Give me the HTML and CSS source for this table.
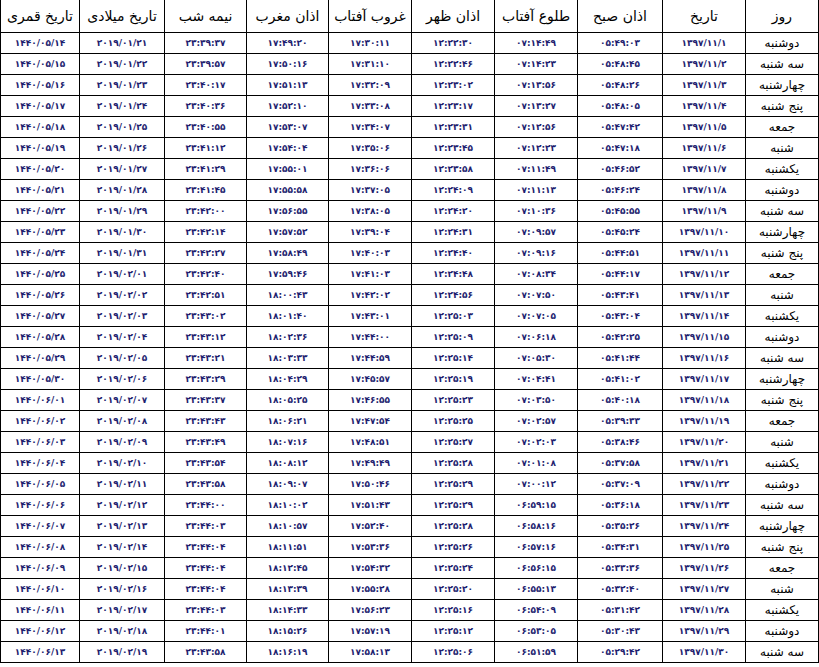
FILE: index.html
```html
<!DOCTYPE html>
<html lang="fa" dir="rtl">
<head>
<meta charset="utf-8">
<title>اوقات شرعی</title>
<link rel="stylesheet" href="styles.css">
</head>
<body>
<table class="times">
<colgroup>
<col class="c-day"><col class="c-date"><col class="c-fajr"><col class="c-sunrise"><col class="c-dhuhr"><col class="c-sunset"><col class="c-maghrib"><col class="c-midnight"><col class="c-greg"><col class="c-hijri">
</colgroup>
<thead>
<tr><th>روز</th><th>تاریخ</th><th>اذان صبح</th><th>طلوع آفتاب</th><th>اذان ظهر</th><th>غروب آفتاب</th><th>اذان مغرب</th><th>نیمه شب</th><th>تاریخ میلادی</th><th>تاریخ قمری</th></tr>
</thead>
<tbody>
<tr><td class="day">دوشنبه</td><td class="num">۱۳۹۷/۱۱/۱</td><td class="num">۰۵:۴۹:۰۳</td><td class="num">۰۷:۱۴:۴۹</td><td class="num">۱۲:۲۲:۳۰</td><td class="num">۱۷:۳۰:۱۱</td><td class="num">۱۷:۴۹:۲۰</td><td class="num">۲۳:۳۹:۳۷</td><td class="num">۲۰۱۹/۰۱/۲۱</td><td class="num">۱۴۴۰/۰۵/۱۴</td></tr>
<tr><td class="day">سه شنبه</td><td class="num">۱۳۹۷/۱۱/۲</td><td class="num">۰۵:۴۸:۴۵</td><td class="num">۰۷:۱۴:۲۳</td><td class="num">۱۲:۲۲:۴۶</td><td class="num">۱۷:۳۱:۱۰</td><td class="num">۱۷:۵۰:۱۶</td><td class="num">۲۳:۳۹:۵۷</td><td class="num">۲۰۱۹/۰۱/۲۲</td><td class="num">۱۴۴۰/۰۵/۱۵</td></tr>
<tr><td class="day">چهارشنبه</td><td class="num">۱۳۹۷/۱۱/۳</td><td class="num">۰۵:۴۸:۲۶</td><td class="num">۰۷:۱۳:۵۶</td><td class="num">۱۲:۲۳:۰۲</td><td class="num">۱۷:۳۲:۰۹</td><td class="num">۱۷:۵۱:۱۳</td><td class="num">۲۳:۴۰:۱۷</td><td class="num">۲۰۱۹/۰۱/۲۳</td><td class="num">۱۴۴۰/۰۵/۱۶</td></tr>
<tr><td class="day">پنج شنبه</td><td class="num">۱۳۹۷/۱۱/۴</td><td class="num">۰۵:۴۸:۰۵</td><td class="num">۰۷:۱۳:۲۷</td><td class="num">۱۲:۲۳:۱۷</td><td class="num">۱۷:۳۳:۰۸</td><td class="num">۱۷:۵۲:۱۰</td><td class="num">۲۳:۴۰:۳۶</td><td class="num">۲۰۱۹/۰۱/۲۴</td><td class="num">۱۴۴۰/۰۵/۱۷</td></tr>
<tr><td class="day">جمعه</td><td class="num">۱۳۹۷/۱۱/۵</td><td class="num">۰۵:۴۷:۴۲</td><td class="num">۰۷:۱۲:۵۶</td><td class="num">۱۲:۲۳:۳۱</td><td class="num">۱۷:۳۴:۰۷</td><td class="num">۱۷:۵۳:۰۷</td><td class="num">۲۳:۴۰:۵۵</td><td class="num">۲۰۱۹/۰۱/۲۵</td><td class="num">۱۴۴۰/۰۵/۱۸</td></tr>
<tr><td class="day">شنبه</td><td class="num">۱۳۹۷/۱۱/۶</td><td class="num">۰۵:۴۷:۱۸</td><td class="num">۰۷:۱۲:۲۳</td><td class="num">۱۲:۲۳:۴۵</td><td class="num">۱۷:۳۵:۰۶</td><td class="num">۱۷:۵۴:۰۴</td><td class="num">۲۳:۴۱:۱۲</td><td class="num">۲۰۱۹/۰۱/۲۶</td><td class="num">۱۴۴۰/۰۵/۱۹</td></tr>
<tr><td class="day">یکشنبه</td><td class="num">۱۳۹۷/۱۱/۷</td><td class="num">۰۵:۴۶:۵۲</td><td class="num">۰۷:۱۱:۴۹</td><td class="num">۱۲:۲۳:۵۸</td><td class="num">۱۷:۳۶:۰۶</td><td class="num">۱۷:۵۵:۰۱</td><td class="num">۲۳:۴۱:۲۹</td><td class="num">۲۰۱۹/۰۱/۲۷</td><td class="num">۱۴۴۰/۰۵/۲۰</td></tr>
<tr><td class="day">دوشنبه</td><td class="num">۱۳۹۷/۱۱/۸</td><td class="num">۰۵:۴۶:۲۴</td><td class="num">۰۷:۱۱:۱۳</td><td class="num">۱۲:۲۴:۰۹</td><td class="num">۱۷:۳۷:۰۵</td><td class="num">۱۷:۵۵:۵۸</td><td class="num">۲۳:۴۱:۴۵</td><td class="num">۲۰۱۹/۰۱/۲۸</td><td class="num">۱۴۴۰/۰۵/۲۱</td></tr>
<tr><td class="day">سه شنبه</td><td class="num">۱۳۹۷/۱۱/۹</td><td class="num">۰۵:۴۵:۵۵</td><td class="num">۰۷:۱۰:۳۶</td><td class="num">۱۲:۲۴:۲۰</td><td class="num">۱۷:۳۸:۰۵</td><td class="num">۱۷:۵۶:۵۵</td><td class="num">۲۳:۴۲:۰۰</td><td class="num">۲۰۱۹/۰۱/۲۹</td><td class="num">۱۴۴۰/۰۵/۲۲</td></tr>
<tr><td class="day">چهارشنبه</td><td class="num">۱۳۹۷/۱۱/۱۰</td><td class="num">۰۵:۴۵:۲۴</td><td class="num">۰۷:۰۹:۵۷</td><td class="num">۱۲:۲۴:۳۱</td><td class="num">۱۷:۳۹:۰۴</td><td class="num">۱۷:۵۷:۵۲</td><td class="num">۲۳:۴۲:۱۴</td><td class="num">۲۰۱۹/۰۱/۳۰</td><td class="num">۱۴۴۰/۰۵/۲۳</td></tr>
<tr><td class="day">پنج شنبه</td><td class="num">۱۳۹۷/۱۱/۱۱</td><td class="num">۰۵:۴۴:۵۱</td><td class="num">۰۷:۰۹:۱۶</td><td class="num">۱۲:۲۴:۴۰</td><td class="num">۱۷:۴۰:۰۳</td><td class="num">۱۷:۵۸:۴۹</td><td class="num">۲۳:۴۲:۲۷</td><td class="num">۲۰۱۹/۰۱/۳۱</td><td class="num">۱۴۴۰/۰۵/۲۴</td></tr>
<tr><td class="day">جمعه</td><td class="num">۱۳۹۷/۱۱/۱۲</td><td class="num">۰۵:۴۴:۱۷</td><td class="num">۰۷:۰۸:۳۴</td><td class="num">۱۲:۲۴:۴۸</td><td class="num">۱۷:۴۱:۰۳</td><td class="num">۱۷:۵۹:۴۶</td><td class="num">۲۳:۴۲:۴۰</td><td class="num">۲۰۱۹/۰۲/۰۱</td><td class="num">۱۴۴۰/۰۵/۲۵</td></tr>
<tr><td class="day">شنبه</td><td class="num">۱۳۹۷/۱۱/۱۳</td><td class="num">۰۵:۴۳:۴۱</td><td class="num">۰۷:۰۷:۵۰</td><td class="num">۱۲:۲۴:۵۶</td><td class="num">۱۷:۴۲:۰۲</td><td class="num">۱۸:۰۰:۴۳</td><td class="num">۲۳:۴۲:۵۱</td><td class="num">۲۰۱۹/۰۲/۰۲</td><td class="num">۱۴۴۰/۰۵/۲۶</td></tr>
<tr><td class="day">یکشنبه</td><td class="num">۱۳۹۷/۱۱/۱۴</td><td class="num">۰۵:۴۳:۰۴</td><td class="num">۰۷:۰۷:۰۵</td><td class="num">۱۲:۲۵:۰۳</td><td class="num">۱۷:۴۳:۰۱</td><td class="num">۱۸:۰۱:۴۰</td><td class="num">۲۳:۴۳:۰۲</td><td class="num">۲۰۱۹/۰۲/۰۳</td><td class="num">۱۴۴۰/۰۵/۲۷</td></tr>
<tr><td class="day">دوشنبه</td><td class="num">۱۳۹۷/۱۱/۱۵</td><td class="num">۰۵:۴۲:۲۵</td><td class="num">۰۷:۰۶:۱۸</td><td class="num">۱۲:۲۵:۰۹</td><td class="num">۱۷:۴۴:۰۰</td><td class="num">۱۸:۰۲:۳۶</td><td class="num">۲۳:۴۳:۱۲</td><td class="num">۲۰۱۹/۰۲/۰۴</td><td class="num">۱۴۴۰/۰۵/۲۸</td></tr>
<tr><td class="day">سه شنبه</td><td class="num">۱۳۹۷/۱۱/۱۶</td><td class="num">۰۵:۴۱:۴۴</td><td class="num">۰۷:۰۵:۳۰</td><td class="num">۱۲:۲۵:۱۴</td><td class="num">۱۷:۴۴:۵۹</td><td class="num">۱۸:۰۳:۳۳</td><td class="num">۲۳:۴۳:۲۱</td><td class="num">۲۰۱۹/۰۲/۰۵</td><td class="num">۱۴۴۰/۰۵/۲۹</td></tr>
<tr><td class="day">چهارشنبه</td><td class="num">۱۳۹۷/۱۱/۱۷</td><td class="num">۰۵:۴۱:۰۲</td><td class="num">۰۷:۰۴:۴۱</td><td class="num">۱۲:۲۵:۱۹</td><td class="num">۱۷:۴۵:۵۷</td><td class="num">۱۸:۰۴:۲۹</td><td class="num">۲۳:۴۳:۲۹</td><td class="num">۲۰۱۹/۰۲/۰۶</td><td class="num">۱۴۴۰/۰۵/۳۰</td></tr>
<tr><td class="day">پنج شنبه</td><td class="num">۱۳۹۷/۱۱/۱۸</td><td class="num">۰۵:۴۰:۱۸</td><td class="num">۰۷:۰۳:۵۰</td><td class="num">۱۲:۲۵:۲۳</td><td class="num">۱۷:۴۶:۵۵</td><td class="num">۱۸:۰۵:۲۵</td><td class="num">۲۳:۴۳:۳۷</td><td class="num">۲۰۱۹/۰۲/۰۷</td><td class="num">۱۴۴۰/۰۶/۰۱</td></tr>
<tr><td class="day">جمعه</td><td class="num">۱۳۹۷/۱۱/۱۹</td><td class="num">۰۵:۳۹:۳۳</td><td class="num">۰۷:۰۲:۵۷</td><td class="num">۱۲:۲۵:۲۵</td><td class="num">۱۷:۴۷:۵۴</td><td class="num">۱۸:۰۶:۲۱</td><td class="num">۲۳:۴۳:۴۳</td><td class="num">۲۰۱۹/۰۲/۰۸</td><td class="num">۱۴۴۰/۰۶/۰۲</td></tr>
<tr><td class="day">شنبه</td><td class="num">۱۳۹۷/۱۱/۲۰</td><td class="num">۰۵:۳۸:۴۶</td><td class="num">۰۷:۰۲:۰۳</td><td class="num">۱۲:۲۵:۲۷</td><td class="num">۱۷:۴۸:۵۱</td><td class="num">۱۸:۰۷:۱۶</td><td class="num">۲۳:۴۳:۴۹</td><td class="num">۲۰۱۹/۰۲/۰۹</td><td class="num">۱۴۴۰/۰۶/۰۳</td></tr>
<tr><td class="day">یکشنبه</td><td class="num">۱۳۹۷/۱۱/۲۱</td><td class="num">۰۵:۳۷:۵۸</td><td class="num">۰۷:۰۱:۰۸</td><td class="num">۱۲:۲۵:۲۸</td><td class="num">۱۷:۴۹:۴۹</td><td class="num">۱۸:۰۸:۱۲</td><td class="num">۲۳:۴۳:۵۴</td><td class="num">۲۰۱۹/۰۲/۱۰</td><td class="num">۱۴۴۰/۰۶/۰۴</td></tr>
<tr><td class="day">دوشنبه</td><td class="num">۱۳۹۷/۱۱/۲۲</td><td class="num">۰۵:۳۷:۰۹</td><td class="num">۰۷:۰۰:۱۲</td><td class="num">۱۲:۲۵:۲۹</td><td class="num">۱۷:۵۰:۴۶</td><td class="num">۱۸:۰۹:۰۷</td><td class="num">۲۳:۴۳:۵۸</td><td class="num">۲۰۱۹/۰۲/۱۱</td><td class="num">۱۴۴۰/۰۶/۰۵</td></tr>
<tr><td class="day">سه شنبه</td><td class="num">۱۳۹۷/۱۱/۲۳</td><td class="num">۰۵:۳۶:۱۸</td><td class="num">۰۶:۵۹:۱۵</td><td class="num">۱۲:۲۵:۲۹</td><td class="num">۱۷:۵۱:۴۳</td><td class="num">۱۸:۱۰:۰۲</td><td class="num">۲۳:۴۴:۰۰</td><td class="num">۲۰۱۹/۰۲/۱۲</td><td class="num">۱۴۴۰/۰۶/۰۶</td></tr>
<tr><td class="day">چهارشنبه</td><td class="num">۱۳۹۷/۱۱/۲۴</td><td class="num">۰۵:۳۵:۲۶</td><td class="num">۰۶:۵۸:۱۶</td><td class="num">۱۲:۲۵:۲۸</td><td class="num">۱۷:۵۲:۴۰</td><td class="num">۱۸:۱۰:۵۷</td><td class="num">۲۳:۴۴:۰۳</td><td class="num">۲۰۱۹/۰۲/۱۳</td><td class="num">۱۴۴۰/۰۶/۰۷</td></tr>
<tr><td class="day">پنج شنبه</td><td class="num">۱۳۹۷/۱۱/۲۵</td><td class="num">۰۵:۳۴:۳۱</td><td class="num">۰۶:۵۷:۱۶</td><td class="num">۱۲:۲۵:۲۶</td><td class="num">۱۷:۵۳:۳۶</td><td class="num">۱۸:۱۱:۵۱</td><td class="num">۲۳:۴۴:۰۴</td><td class="num">۲۰۱۹/۰۲/۱۴</td><td class="num">۱۴۴۰/۰۶/۰۸</td></tr>
<tr><td class="day">جمعه</td><td class="num">۱۳۹۷/۱۱/۲۶</td><td class="num">۰۵:۳۳:۳۶</td><td class="num">۰۶:۵۶:۱۵</td><td class="num">۱۲:۲۵:۲۴</td><td class="num">۱۷:۵۴:۳۲</td><td class="num">۱۸:۱۲:۴۵</td><td class="num">۲۳:۴۴:۰۴</td><td class="num">۲۰۱۹/۰۲/۱۵</td><td class="num">۱۴۴۰/۰۶/۰۹</td></tr>
<tr><td class="day">شنبه</td><td class="num">۱۳۹۷/۱۱/۲۷</td><td class="num">۰۵:۳۲:۴۰</td><td class="num">۰۶:۵۵:۱۳</td><td class="num">۱۲:۲۵:۲۰</td><td class="num">۱۷:۵۵:۲۸</td><td class="num">۱۸:۱۳:۳۹</td><td class="num">۲۳:۴۴:۰۴</td><td class="num">۲۰۱۹/۰۲/۱۶</td><td class="num">۱۴۴۰/۰۶/۱۰</td></tr>
<tr><td class="day">یکشنبه</td><td class="num">۱۳۹۷/۱۱/۲۸</td><td class="num">۰۵:۳۱:۴۲</td><td class="num">۰۶:۵۴:۰۹</td><td class="num">۱۲:۲۵:۱۶</td><td class="num">۱۷:۵۶:۲۳</td><td class="num">۱۸:۱۴:۳۳</td><td class="num">۲۳:۴۴:۰۳</td><td class="num">۲۰۱۹/۰۲/۱۷</td><td class="num">۱۴۴۰/۰۶/۱۱</td></tr>
<tr><td class="day">دوشنبه</td><td class="num">۱۳۹۷/۱۱/۲۹</td><td class="num">۰۵:۳۰:۴۳</td><td class="num">۰۶:۵۳:۰۵</td><td class="num">۱۲:۲۵:۱۲</td><td class="num">۱۷:۵۷:۱۹</td><td class="num">۱۸:۱۵:۲۶</td><td class="num">۲۳:۴۴:۰۱</td><td class="num">۲۰۱۹/۰۲/۱۸</td><td class="num">۱۴۴۰/۰۶/۱۲</td></tr>
<tr><td class="day">سه شنبه</td><td class="num">۱۳۹۷/۱۱/۳۰</td><td class="num">۰۵:۲۹:۴۲</td><td class="num">۰۶:۵۱:۵۹</td><td class="num">۱۲:۲۵:۰۶</td><td class="num">۱۷:۵۸:۱۳</td><td class="num">۱۸:۱۶:۱۹</td><td class="num">۲۳:۴۳:۵۸</td><td class="num">۲۰۱۹/۰۲/۱۹</td><td class="num">۱۴۴۰/۰۶/۱۳</td></tr>
</tbody>
</table>
</body>
</html>
```

FILE: styles.css
```css
html, body {
  margin: 0;
  padding: 0;
  background: #ffffff;
}

.times {
  direction: rtl;
  border-collapse: collapse;
  table-layout: fixed;
  width: 819px;
  margin: -1px 0 0 -1px;
  font-family: "DejaVu Sans", "Noto Sans", sans-serif;
}

.c-day { width: 73px; }
.c-date { width: 83px; }
.c-fajr { width: 85px; }
.c-sunrise { width: 83px; }
.c-dhuhr { width: 83px; }
.c-sunset { width: 83px; }
.c-maghrib { width: 82px; }
.c-midnight { width: 82px; }
.c-greg { width: 85px; }
.c-hijri { width: 79px; }

.times th,
.times td {
  border: 1px solid #000000;
  padding: 0;
  text-align: center;
  vertical-align: middle;
  white-space: nowrap;
  overflow: hidden;
}

.times th {
  height: 32px;
  font-size: 14px;
  font-weight: normal;
  color: #000000;
}

.times td {
  height: 20px;
}

.times td.day {
  font-size: 12px;
  color: #000000;
}

.times td.num {
  font-size: 9px;
  font-weight: bold;
  color: #1f1f70;
  letter-spacing: 0.4px;
}
```
